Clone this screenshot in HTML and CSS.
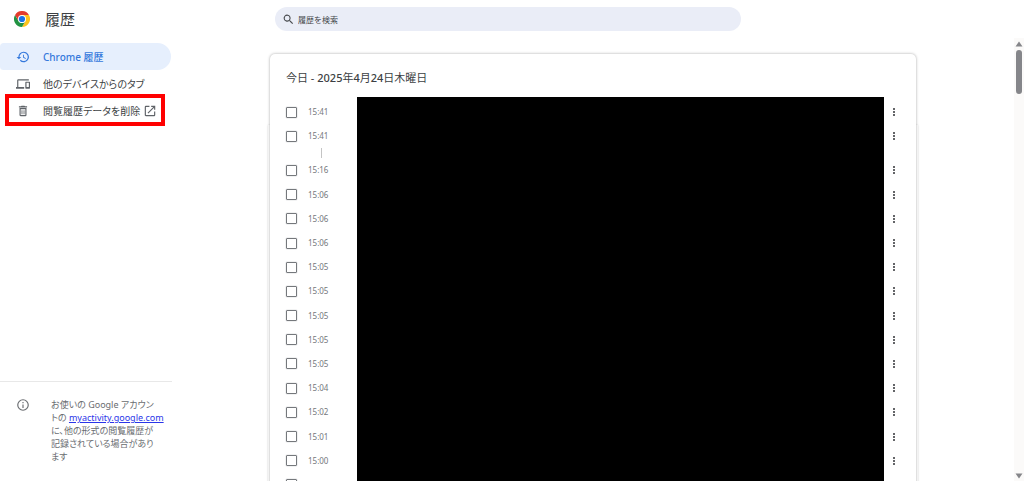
FILE: index.html
```html
<!DOCTYPE html>
<html lang="ja">
<head>
<meta charset="utf-8">
<title>履歴</title>
<link rel="stylesheet" href="styles.css">
</head>
<body>
<header class="toolbar">
  <div class="brand">
    <svg class="logo" viewBox="0 0 48 48" aria-hidden="true">
      <path fill="#e33b2e" d="M24 24 3.2 12A24 24 0 0 1 44.8 12Z"/>
      <path fill="#fcc31e" d="M24 24V12h20.8A24 24 0 0 1 24 48l10.4-18Z"/>
      <path fill="#229342" d="M24 48A24 24 0 0 1 3.2 12l10.4 18A12 12 0 0 0 34.4 30Z"/>
      <path fill="#e33b2e" d="M3.2 12 13.6 30 24 12Z"/>
      <circle cx="24" cy="24" r="12" fill="#fff"/>
      <circle cx="24" cy="24" r="9.3" fill="#1a73e8"/>
    </svg>
    <h1 class="title">履歴</h1>
  </div>
  <div class="search-area">
    <label class="search">
      <svg class="search-icon" viewBox="0 0 24 24" aria-hidden="true"><path d="M15.5 14h-.8l-.3-.3A6.5 6.5 0 1 0 13.7 14.400l.3.3v.8l5 5 1.500-1.500zM9.500 14a4.500 4.500 0 1 1 0-9 4.500 4.500 0 0 1 0 9z"/></svg>
      <input class="search-input" type="search" placeholder="履歴を検索" aria-label="履歴を検索">
    </label>
  </div>
</header>
<div class="page">
  <aside class="sidebar">
    <nav class="menu">
      <a class="menu-item selected" href="#history">
        <svg class="icon" viewBox="0 0 24 24" aria-hidden="true"><path d="M13 3a9 9 0 0 0-9 9H1l3.900 3.900.1.1L9 12H6a7 7 0 1 1 2.100 4.900l-1.400 1.400A9 9 0 1 0 13 3zm-1 5v5l4.300 2.500.7-1.200-3.500-2.100V8z"/></svg>
        <span>Chrome 履歴</span>
      </a>
      <a class="menu-item" href="#synced">
        <svg class="icon" viewBox="0 0 24 24" aria-hidden="true"><path d="M4 6h18V4H4a2 2 0 0 0-2 2v11H0v3h14v-3H4zm19 2h-6a1 1 0 0 0-1 1v10a1 1 0 0 0 1 1h6a1 1 0 0 0 1-1V9a1 1 0 0 0-1-1zm-1 9h-4v-7h4z"/></svg>
        <span>他のデバイスからのタブ</span>
      </a>
      <a class="menu-item highlighted" href="#clear">
        <svg class="icon" viewBox="0 0 24 24" aria-hidden="true"><path d="M16 9v10H8V9zm-1.500-6h-5l-1 1H5v2h14V4h-3.500zM18 7H6v12c0 1.100.9 2 2 2h8a2 2 0 0 0 2-2zM9.500 10.500h1.500v7H9.500zm3.500 0h1.500v7H13z"/></svg>
        <span>閲覧履歴データを削除</span>
        <svg class="icon" viewBox="0 0 24 24" aria-hidden="true"><path d="M19 19H5V5h6V3H5a2 2 0 0 0-2 2v14c0 1.100.9 2 2 2h14a2 2 0 0 0 2-2v-6h-2zM14 3v2h3.600l-9.800 9.800 1.400 1.400L19 6.400V10h2V3z"/></svg>
      </a>
    </nav>
    <footer class="notice">
      <svg class="icon" viewBox="0 0 24 24" aria-hidden="true"><path d="M11 7h2v2h-2zm0 4h2v6h-2zm1-9a10 10 0 1 0 0 20 10 10 0 0 0 0-20zm0 18a8 8 0 1 1 0-16 8 8 0 0 1 0 16z"/></svg>
      <p class="notice-text">お使いの Google アカウン<br>トの <a href="#activity">myactivity.google.com</a><br>に、他の形式の閲覧履歴が<br>記録されている場合があり<br>ます</p>
    </footer>
  </aside>
  <main class="content">
    <section class="card">
      <h2 class="date">今日 - <b>2025</b>年<b>4</b>月<b>24</b>日木曜日</h2>
      <div class="entries">
        <ul class="visits">
          <li><label><input type="checkbox">15:41</label></li>
          <li><label><input type="checkbox">15:41</label></li>
          <li class="gap"></li>
          <li><label><input type="checkbox">15:16</label></li>
          <li><label><input type="checkbox">15:06</label></li>
          <li><label><input type="checkbox">15:06</label></li>
          <li><label><input type="checkbox">15:06</label></li>
          <li><label><input type="checkbox">15:05</label></li>
          <li><label><input type="checkbox">15:05</label></li>
          <li><label><input type="checkbox">15:05</label></li>
          <li><label><input type="checkbox">15:05</label></li>
          <li><label><input type="checkbox">15:05</label></li>
          <li><label><input type="checkbox">15:04</label></li>
          <li><label><input type="checkbox">15:02</label></li>
          <li><label><input type="checkbox">15:01</label></li>
          <li><label><input type="checkbox">15:00</label></li>
          <li><label><input type="checkbox" aria-label="履歴"></label></li>
        </ul>
        <div class="redaction"></div>
        <ul class="actions">
          <li><button class="more" aria-label="操作"></button></li>
          <li><button class="more" aria-label="操作"></button></li>
          <li class="gap"></li>
          <li><button class="more" aria-label="操作"></button></li>
          <li><button class="more" aria-label="操作"></button></li>
          <li><button class="more" aria-label="操作"></button></li>
          <li><button class="more" aria-label="操作"></button></li>
          <li><button class="more" aria-label="操作"></button></li>
          <li><button class="more" aria-label="操作"></button></li>
          <li><button class="more" aria-label="操作"></button></li>
          <li><button class="more" aria-label="操作"></button></li>
          <li><button class="more" aria-label="操作"></button></li>
          <li><button class="more" aria-label="操作"></button></li>
          <li><button class="more" aria-label="操作"></button></li>
          <li><button class="more" aria-label="操作"></button></li>
          <li><button class="more" aria-label="操作"></button></li>
          <li><button class="more" aria-label="操作"></button></li>
        </ul>
      </div>
    </section>
  </main>
  <div class="scrollbar" aria-hidden="true">
    <svg class="arrow" viewBox="0 0 8 6"><path d="M4 .5 7.500 5.500H.5z"/></svg>
    <div class="thumb"></div>
    <svg class="arrow" viewBox="0 0 8 6"><path d="M4 5.500 7.500.5H.5z"/></svg>
  </div>
</div>
</body>
</html>
```

FILE: styles.css
```css
* {
  box-sizing: border-box;
}

body {
  margin: 0;
  height: 100vh;
  overflow: hidden;
  display: flex;
  flex-direction: column;
  background: #fff;
  color: #3c3f43;
  font-family: "Noto Sans", "Noto Sans CJK JP", sans-serif;
  font-size: 10px;
}

ul {
  margin: 0;
  padding: 0;
  list-style: none;
}

.toolbar,
.page {
  display: grid;
  grid-template-columns: 172px minmax(0, 1fr) 10px;
}

.toolbar {
  height: 38px;
  flex: none;
  align-items: center;
}

.brand {
  display: flex;
  align-items: center;
  gap: 15px;
  padding-left: 14px;
}

.logo {
  width: 16px;
  height: 16px;
}

.title {
  margin: 0;
  font-size: 15px;
  line-height: 20px;
  font-weight: 400;
}

.search-area {
  width: 100%;
  max-width: 646px;
  margin: 0 auto;
  padding-left: 5px;
}

.search {
  display: flex;
  align-items: center;
  gap: 3px;
  width: 100%;
  max-width: 466px;
  height: 24px;
  padding: 0 7px;
  border-radius: 12px;
  background: #eaedf7;
}

.search-icon {
  width: 13px;
  height: 13px;
  fill: #4a4d51;
}

.search-input {
  flex: 1;
  min-width: 0;
  padding: 0;
  border: 0;
  outline: 0;
  background: none;
  font: inherit;
  font-size: 8px;
}

.search-input::placeholder {
  color: #44474b;
  opacity: 1;
}

.page {
  grid-template-rows: minmax(0, 1fr);
  flex: 1;
  min-height: 0;
}

.sidebar {
  display: flex;
  flex-direction: column;
  justify-content: space-between;
  min-height: 0;
}

.menu {
  padding-top: 5px;
}

.menu-item {
  position: relative;
  display: flex;
  align-items: center;
  gap: 13px;
  height: 27px;
  margin-right: 1px;
  padding-left: 16px;
  color: #3c3f43;
  text-decoration: none;
  white-space: nowrap;
  font-feature-settings: "palt";
}

.menu-item .icon {
  fill: #5f6368;
}

.menu-item .icon:last-child {
  margin-left: -10px;
}

.selected {
  border-radius: 4px 14px 14px 4px;
  background: #e6effd;
  color: #3478dc;
  font-weight: 500;
}

.selected .icon {
  fill: #3478dc;
}

.highlighted::after {
  content: "";
  position: absolute;
  inset: -3px 6px -2px 5px;
  border: 4px solid #f00;
}

.icon {
  width: 14px;
  height: 14px;
  flex: none;
  fill: currentColor;
}

.notice {
  display: flex;
  gap: 21px;
  padding: 16px 0 18px 16px;
  border-top: 1px solid #e8e8e8;
  color: #6a6d71;
}

.notice-text {
  margin: 0;
  font-size: 9px;
  line-height: 13px;
  font-feature-settings: "palt";
  white-space: nowrap;
}

.notice-text a {
  color: #2a35e8;
}

.content {
  padding-top: 16px;
  min-width: 0;
}

.card {
  position: relative;
  max-width: 646px;
  margin: 0 auto;
  padding: 16px 0 0 16px;
  border-radius: 5px;
  background: #fff;
  box-shadow: 0 0 3px rgba(0, 0, 0, 0.35);
}

.card::before {
  content: "";
  position: absolute;
  z-index: -1;
  inset: 71px -2px 0;
  box-shadow: 0 0 2px rgba(0, 0, 0, 0.15);
}

.date {
  margin: 0 0 11px;
  font-size: 11px;
  line-height: 16px;
  font-weight: 400;
}

.date b {
  font-weight: 500;
}

.entries {
  display: grid;
  grid-template-columns: 71px minmax(0, 1fr) 32px;
  height: 400px;
}

.visits,
.actions {
  display: flex;
  flex-direction: column;
  padding-top: 3px;
}

.visits li,
.actions li {
  flex: 1;
  display: flex;
  align-items: center;
}

.visits .gap,
.actions .gap {
  flex: 0 0 10px;
}

.visits .gap::before {
  content: "";
  width: 1px;
  height: 10px;
  margin-left: 35px;
  background: #c4c4c4;
}

.visits label {
  display: flex;
  align-items: center;
  gap: 11px;
  color: #74777b;
  font-size: 8px;
  line-height: 12px;
}

.visits input {
  appearance: none;
  width: 11px;
  height: 11px;
  margin: 0;
  border: 1px solid #75787c;
  border-radius: 1px;
  box-shadow: 0 0 1px #75787c;
}

.redaction {
  background: #000;
}

.actions li {
  padding-left: 6px;
}

.more {
  display: grid;
  place-items: center;
  width: 8px;
  height: 14px;
  padding: 0;
  border: 0;
  background: none;
}

.more::before {
  content: "";
  width: 2px;
  height: 2px;
  border-radius: 1px;
  background: #303236;
  box-shadow: 0 -3px #303236, 0 3px #303236;
}

.scrollbar {
  display: flex;
  flex-direction: column;
  align-items: center;
  gap: 3px;
  padding: 3px 0 2px;
  background: #fbfaf9;
}

.arrow {
  width: 8px;
  height: 6px;
  fill: #85868a;
}

.arrow:last-child {
  margin-top: auto;
}

.thumb {
  width: 6px;
  height: 44px;
  border-radius: 3px;
  background: #85868a;
}
```
